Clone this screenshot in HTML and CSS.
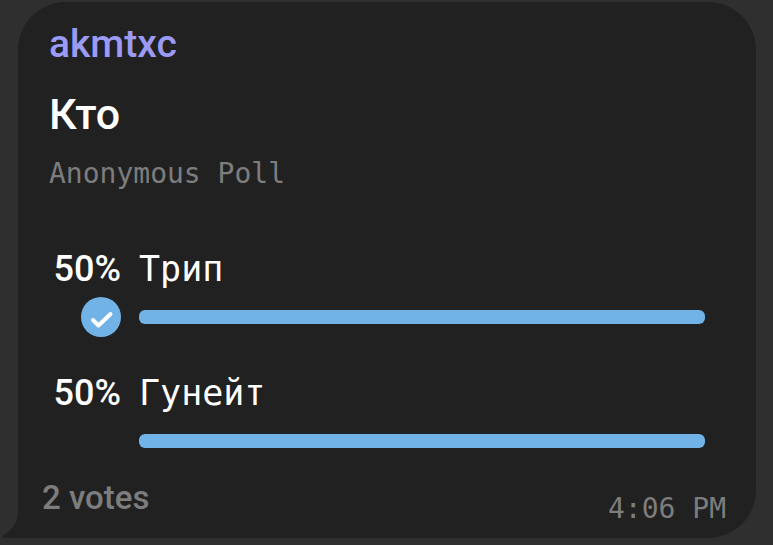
FILE: index.html
```
<!DOCTYPE html>
<html lang="en">
<head>
  <meta charset="UTF-8">
  <meta name="viewport" content="width=device-width, initial-scale=1.0">
  <title>Poll</title>
  <link rel="stylesheet" href="styles.css">
</head>
<body>
  <article class="message">
    <svg class="message-tail" viewBox="0 0 20 50" aria-hidden="true">
      <path d="M16 0V18C16 28 10 36 2 41C-1 43 1 44 4 44H20V0Z" fill="#212121"/>
    </svg>
    <div class="sender">akmtxc</div>
    <h1 class="question">Кто</h1>
    <div class="poll-type">Anonymous Poll</div>

    <div class="options">
      <div class="option">
        <div class="percent">50%</div>
        <div class="answer">Трип</div>
        <svg class="check" viewBox="0 0 40 40" role="img" aria-label="Your vote">
          <circle cx="20" cy="20" r="20" fill="#71b3e7"/>
          <path d="M12 23L17.500 28.500L29.500 17" fill="none" stroke="#fff" stroke-width="4" stroke-linecap="round" stroke-linejoin="round"/>
        </svg>
        <div class="bar"></div>
      </div>
      <div class="option">
        <div class="percent">50%</div>
        <div class="answer">Гунейт</div>
        <div class="bar"></div>
      </div>
    </div>

    <footer class="message-footer">
      <div class="votes">2 votes</div>
      <time class="time" datetime="16:06">4:06 PM</time>
    </footer>
  </article>
</body>
</html>
```
FILE: styles.css
```
* {
  margin: 0;
  padding: 0;
  box-sizing: border-box;
}

body {
  background-color: #2f2f2f;
  color: #fff;
  font-family: Roboto, "Open Sans", sans-serif;
  padding: 2px 17px 7px 18px;
}

.message {
  position: relative;
  background-color: #212121;
  border-radius: 48px 48px 48px 0;
  padding: 20px 30px 11px 31px;
}

/* little hook that sticks out under the bubble */
.message-tail {
  position: absolute;
  left: -16px;
  bottom: -6px;
  width: 20px;
  height: 50px;
}

.sender {
  color: #9b9bf5;
  font-size: 39px;
  font-weight: 500;
  line-height: 44px;
}

.question {
  font-size: 43px;
  font-weight: 500;
  line-height: 48px;
  margin-top: 24px;
}

.poll-type,
.answer,
.time {
  font-family: "DejaVu Sans Mono", monospace;
}

.poll-type,
.time {
  color: #7d7d7d;
  font-size: 28px;
  line-height: 36px;
}

.poll-type {
  margin-top: 18px;
}

.options {
  display: flex;
  flex-direction: column;
  gap: 28px;
  padding: 49px 21px 0 0;
}

.option {
  display: grid;
  grid-template-columns: 72px 1fr;
  grid-template-rows: 56px 40px;
  column-gap: 18px;
  align-items: center;
}

.percent {
  font-size: 36px;
  font-weight: 500;
  text-align: right;
}

.answer {
  font-size: 35px;
}

.check {
  width: 40px;
  height: 40px;
  justify-self: end;
}

.bar {
  grid-column: 2;
  height: 14px;
  border-radius: 6px;
  background-color: #71b3e7;
}

.message-footer {
  display: flex;
  justify-content: space-between;
  align-items: flex-end;
  margin: 8px 0 0 -7px;
}

.votes {
  color: #7d7d7d;
  font-size: 33px;
  font-weight: 500;
  line-height: 58px;
}
```
